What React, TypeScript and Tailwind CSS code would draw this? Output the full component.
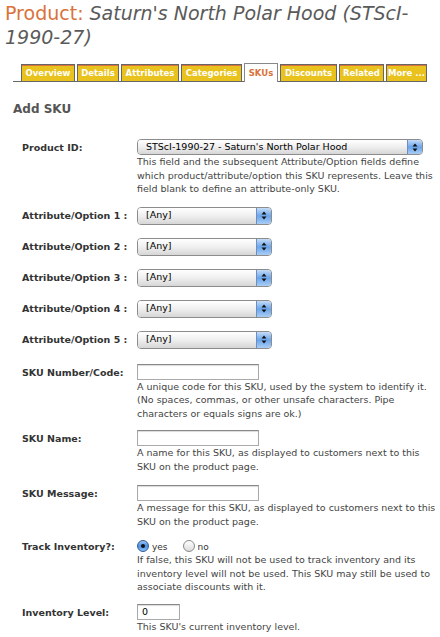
import React from 'react';

const tabs = [
  { label: 'Overview', w: 'w-[54px]' },
  { label: 'Details', w: 'w-[42px]' },
  { label: 'Attributes', w: 'w-[58px]' },
  { label: 'Categories', w: 'w-[61px]' },
  { label: 'SKUs', w: 'w-[34px]', active: true },
  { label: 'Discounts', w: 'w-[57px]' },
  { label: 'Related', w: 'w-[45px]' },
  { label: 'More ...', w: 'w-[41px]' },
];

function Arrows() {
  return (
    <svg width="6" height="9" viewBox="0 0 6 9">
      <path d="M3 0.5 L5.5 3.5 H0.5 Z" fill="#111" />
      <path d="M3 8.5 L5.5 5.5 H0.5 Z" fill="#111" />
    </svg>
  );
}

function AquaSelect({ value, wide }: { value: string; wide?: boolean }) {
  return (
    <div
      className={`flex items-stretch rounded-[4px] border border-[#8c8c8c] overflow-hidden ${
        wide ? 'w-[286px] h-[16px]' : 'w-[135px] h-[18px]'
      }`}
    >
      <div className="flex-1 flex items-center pl-[8px] text-[9.5px] text-black bg-gradient-to-b from-[#ffffff] via-[#efefef] to-[#d6d6d6]">
        {value}
      </div>
      <div className="w-[15px] flex items-center justify-center border-l border-[#6d8fc0] bg-gradient-to-b from-[#c4dcf7] via-[#6aa4ea] to-[#a9cdf5]">
        <Arrows />
      </div>
    </div>
  );
}

function TextBox({ w = 'w-[122px]', value = '' }: { w?: string; value?: string }) {
  return (
    <div
      className={`${w} h-[16px] border border-[#aaa] border-t-[#888] bg-white shadow-[inset_0_1px_1px_rgba(0,0,0,0.15)] text-[9.5px] text-black pl-[4px] leading-[14px]`}
    >
      {value}
    </div>
  );
}

function Row({
  label,
  children,
  className = '',
}: {
  label: string;
  children: React.ReactNode;
  className?: string;
}) {
  return (
    <div className={`flex ${className}`}>
      <div className="w-[137px] pl-[22px] pt-[2px] text-[9.5px] font-bold text-[#333] leading-[13px] shrink-0">
        {label}
      </div>
      <div className="flex-1 pr-[2px]">{children}</div>
    </div>
  );
}

function Help({ children }: { children: React.ReactNode }) {
  return <p className="text-[9.5px] leading-[13.5px] text-[#444]">{children}</p>;
}

function Radio({ checked }: { checked?: boolean }) {
  return checked ? (
    <span className="block w-[12px] h-[12px] rounded-full border border-[#2d5c9c] bg-gradient-to-b from-[#9cc4f2] via-[#4c8fe2] to-[#8ec0f5] flex items-center justify-center">
      <span className="block w-[4px] h-[4px] rounded-full bg-[#111]" />
    </span>
  ) : (
    <span className="block w-[12px] h-[12px] rounded-full border border-[#8a8a8a] bg-gradient-to-b from-[#ffffff] to-[#dcdcdc]" />
  );
}

export default function App() {
  return (
    <div className="w-[440px] h-[637px] bg-white overflow-hidden font-['DejaVu_Sans',sans-serif]">
      {/* page title, broken after the hyphen like the original */}
      <h1 className="px-[5px] pt-[1px] text-[19px] leading-[24px] font-normal">
        <div className="whitespace-nowrap">
          <span className="text-[#d9733b]">Product:</span>
          <span className="ml-[6px] italic text-[#5a5a5a]">Saturn's North Polar Hood (STScI-</span>
        </div>
        <div className="italic text-[#5a5a5a]">1990-27)</div>
      </h1>

      <div className="mt-[15px] ml-[13px] w-[414px] border-b border-[#666] flex items-end gap-[2px] pl-[8px] h-[18px]">
        {tabs.map((t) =>
          t.active ? (
            <div
              key={t.label}
              className={`${t.w} h-[19px] -mb-px bg-white border border-[#888] border-b-0 flex items-center justify-center text-[8.5px] font-bold text-[#d9733b] whitespace-nowrap`}
            >
              {t.label}
            </div>
          ) : (
            <div
              key={t.label}
              className={`${t.w} h-[17px] bg-[#e9c21e] border border-[#666] border-b-0 shadow-[inset_0_1px_0_#d9733b] flex items-center justify-center text-[8.5px] font-bold text-white whitespace-nowrap`}
            >
              {t.label}
            </div>
          )
        )}
      </div>

      <h2 className="mt-[20px] ml-[13px] text-[12px] font-bold text-[#555] leading-[14px]">Add SKU</h2>

      <Row label="Product ID:" className="mt-[23px]">
        <AquaSelect value="STScI-1990-27 - Saturn's North Polar Hood" wide />
        <Help>
          This field and the subsequent Attribute/Option fields define which product/attribute/option
          this SKU represents. Leave this field blank to define an attribute-only SKU.
        </Help>
      </Row>

      {[1, 2, 3, 4, 5].map((n) => (
        <Row key={n} label={`Attribute/Option ${n} :`} className={n === 1 ? 'mt-[11px]' : 'mt-[13px]'}>
          <AquaSelect value="[Any]" />
        </Row>
      ))}

      <Row label="SKU Number/Code:" className="mt-[15px]">
        <TextBox />
        <Help>
          A unique code for this SKU, used by the system to identify it. (No spaces, commas, or other
          unsafe characters. Pipe characters or equals signs are ok.)
        </Help>
      </Row>

      <Row label="SKU Name:" className="mt-[10px]">
        <TextBox />
        <Help>A name for this SKU, as displayed to customers next to this SKU on the product page.</Help>
      </Row>

      <Row label="SKU Message:" className="mt-[12px]">
        <TextBox />
        <Help>A message for this SKU, as displayed to customers next to this SKU on the product page.</Help>
      </Row>

      <Row label="Track Inventory?:" className="mt-[10px]">
        <div className="flex items-center h-[15px] text-[9px] text-[#333]">
          <Radio checked />
          <span className="ml-[3px] mt-[4px]">yes</span>
          <span className="ml-[15px]">
            <Radio />
          </span>
          <span className="ml-[3px] mt-[4px]">no</span>
        </div>
        <Help>
          If false, this SKU will not be used to track inventory and its inventory level will not be
          used. This SKU may still be used to associate discounts with it.
        </Help>
      </Row>

      <Row label="Inventory Level:" className="mt-[10px]">
        <TextBox w="w-[43px]" value="0" />
        <Help>This SKU's current inventory level.</Help>
      </Row>
    </div>
  );
}
